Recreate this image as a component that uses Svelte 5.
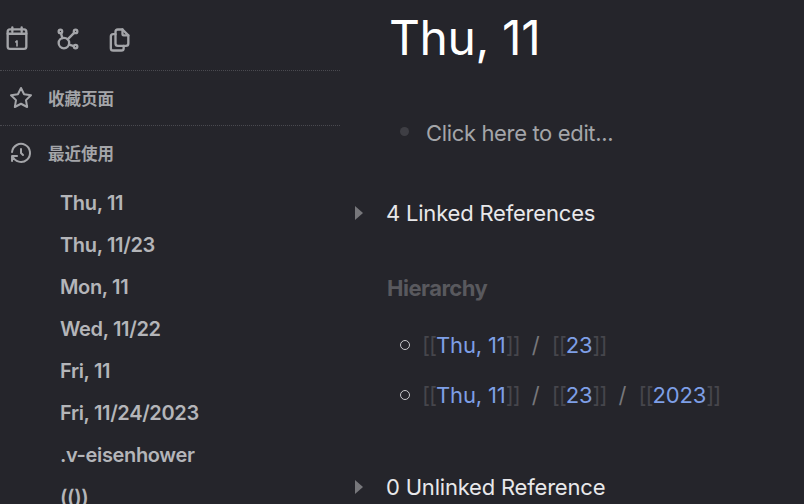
<script lang="ts">
  const recent = ["Thu, 11", "Thu, 11/23", "Mon, 11", "Wed, 11/22", "Fri, 11", "Fri, 11/24/2023", ".v-eisenhower", "(())"];
  const crumbs = [["Thu, 11", "23"], ["Thu, 11", "23", "2023"]];
</script>

<div class="page">
  <aside class="sidebar">
    <div class="tools">
      <svg width="28" height="28" viewBox="0 0 24 24"><rect x="4" y="3.800" width="16" height="16.700" rx="2" /><path d="M4 7.500h16M8 2v3.500M16 2v3.500" /><path class="thin" d="M11 14.500l1-.8v4.300" /></svg>
      <svg width="28" height="28" viewBox="0 0 24 24"><path d="M5.931 6.936l1.275 4.249m5.607 5.609l4.251 1.275" /><path d="M11.683 12.317l5.759-5.759" /><circle cx="5.500" cy="5.500" r="1.500" /><circle cx="18.500" cy="5.500" r="1.500" /><circle cx="18.500" cy="18.500" r="1.500" /><circle cx="8.500" cy="15.500" r="4.500" /></svg>
      <svg class="files" width="28" height="28" viewBox="0 0 24 24"><path d="M15 3v4a1 1 0 0 0 1 1h4" /><path d="M18 17h-7a2 2 0 0 1-2-2v-10a2 2 0 0 1 2-2h4l5 5v7a2 2 0 0 1-2 2z" /><path d="M16 17v2a2 2 0 0 1-2 2h-7a2 2 0 0 1-2-2v-10a2 2 0 0 1 2-2h2" /></svg>
    </div>
    <div class="section fav">
      <svg width="24" height="24" viewBox="0 0 24 24"><path d="M12 17.750l-6.172 3.245l1.179-6.873l-5-4.867l6.900-1l3.086-6.253l3.086 6.253l6.900 1l-5 4.867l1.179 6.873z" /></svg>
      <span>收藏页面</span>
    </div>
    <div class="section hist">
      <svg width="24" height="24" viewBox="0 0 24 24"><path d="M12 8v4l2 2" /><path d="M3.050 11a9 9 0 1 1 .5 4m-.5 5v-5h5" /></svg>
      <span>最近使用</span>
    </div>
    <ul class="recent">
      {#each recent as item}
        <li>{item}</li>
      {/each}
    </ul>
  </aside>

  <main class="content">
    <h1>Thu, 11</h1>
    <div class="edit"><i class="dot"></i><span>Click here to edit...</span></div>
    <div class="refs"><i class="arrow"></i><span>4 Linked References</span></div>
    <h3>Hierarchy</h3>
    <ul class="crumbs">
      {#each crumbs as row}
        <li>
          <i class="ring"></i>
          {#each row as part, i}
            {#if i > 0}<span class="slash">/</span>{/if}
            <span class="link"><b>[[</b>{part}<b>]]</b></span>
          {/each}
        </li>
      {/each}
    </ul>
    <div class="refs unlinked"><i class="arrow"></i><span>0 Unlinked Reference</span></div>
  </main>
</div>

<style>
  :global(body) {
    margin: 0;
    background: #25252b;
  }
  .page {
    display: flex;
    width: 804px;
    height: 504px;
    overflow: hidden;
    background: #25252b;
    font-family: Inter, "Noto Sans CJK SC", sans-serif;
  }
  .sidebar {
    width: 340px;
    flex: none;
  }
  svg {
    fill: none;
    stroke: #a4a5a9;
    stroke-width: 2;
    stroke-linecap: round;
    stroke-linejoin: round;
    flex: none;
  }
  .tools svg {
    stroke-width: 2;
  }
  .tools .thin {
    stroke-width: 1.400;
  }
  .tools .files {
    margin-top: 1px;
  }
  .tools {
    display: flex;
    gap: 23px;
    height: 71px;
    padding: 25px 0 0 3px;
    box-sizing: border-box;
    border-bottom: 1px dotted #4a4a50;
  }
  .section {
    display: flex;
    align-items: center;
    gap: 15px;
    padding-left: 9px;
    height: 55px;
    color: #a4a5a9;
    font-size: 16.500px;
    font-weight: 700;
    box-sizing: border-box;
  }
  .fav {
    border-bottom: 1px dotted #4a4a50;
  }
  .hist {
    height: 54px;
  }
  .recent {
    list-style: none;
    margin: 0;
    padding: 2px 0 0 60px;
  }
  .recent li {
    height: 42px;
    line-height: 42px;
    font-size: 20px;
    font-weight: 600;
    letter-spacing: -0.35px;
    color: #b4b5b9;
    white-space: nowrap;
  }
  .content {
    flex: 1;
    min-width: 0;
    color: #e8e8ea;
  }
  h1 {
    margin: 0;
    padding: 10px 0 0 49px;
    height: 55px;
    font-size: 48px;
    line-height: 55px;
    font-weight: 400;
    letter-spacing: -0.4px;
    color: #fff;
  }
  .edit {
    display: flex;
    align-items: center;
    margin-top: 53px;
    padding-left: 60px;
    height: 30px;
    font-size: 22px;
    letter-spacing: -0.35px;
    color: #a4a5a9;
  }
  .dot {
    width: 9px;
    height: 9px;
    margin-right: 17px;
    margin-bottom: 4px;
    border-radius: 50%;
    background: #3e3e44;
  }
  .refs {
    display: flex;
    align-items: center;
    margin-top: 50px;
    padding-left: 15px;
    height: 30px;
    font-size: 22px;
    letter-spacing: -0.2px;
    color: #e8e8ea;
  }
  .arrow {
    width: 0;
    height: 0;
    margin-right: 23px;
    border-left: 8px solid #77777b;
    border-top: 7px solid transparent;
    border-bottom: 7px solid transparent;
  }
  h3 {
    margin: 45px 0 0 47px;
    height: 30px;
    line-height: 30px;
    font-size: 22px;
    font-weight: 700;
    letter-spacing: -0.5px;
    color: #59595e;
  }
  .crumbs {
    list-style: none;
    margin: 17px 0 0;
    padding: 0 0 0 60px;
  }
  .crumbs li {
    display: flex;
    align-items: center;
    height: 50px;
    font-size: 22px;
    white-space: nowrap;
  }
  .ring {
    width: 8px;
    height: 8px;
    margin-right: 12px;
    border: 1.500px solid #c8c8cb;
    border-radius: 50%;
    box-sizing: content-box;
  }
  .link {
    letter-spacing: -0.15px;
    color: #7e9fe6;
  }
  .link b {
    font-weight: 400;
    letter-spacing: -1px;
    color: #46464c;
  }
  .slash {
    margin: 0 12px;
    color: #77777b;
  }
  .unlinked {
    margin-top: 52px;
  }
</style>
